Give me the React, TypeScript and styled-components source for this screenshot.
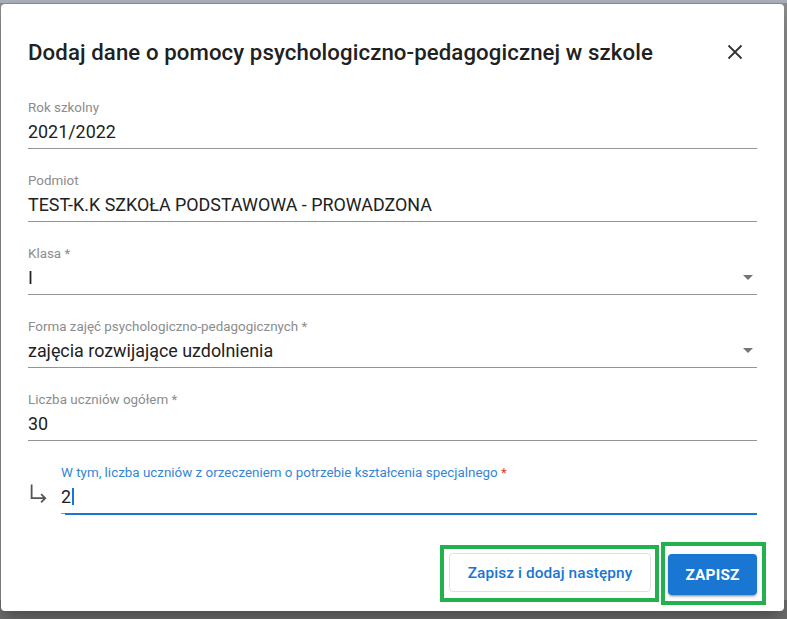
import React from "react";
import styled, { createGlobalStyle } from "styled-components";

const GlobalStyle = createGlobalStyle`
  html, body {
    margin: 0;
    padding: 0;
  }
  body {
    width: 787px;
    height: 619px;
    overflow: hidden;
    font-family: Roboto, "Noto Sans", Arial, sans-serif;
    background: linear-gradient(to bottom, #a9adb5 0, #a9adb5 3px, #8a8a8a 3px, #8a8a8a 600px, #6e6e6e 600px);
  }
`;

const Backdrop = styled.div`
  display: flex;
  justify-content: flex-start;
  padding: 4px 0 0 1px;
`;

const Dialog = styled.div`
  width: 783px;
  height: 607px;
  background: #fff;
  border-radius: 4px;
  box-sizing: border-box;
  display: flex;
  flex-direction: column;
  box-shadow: 0 8px 10px -5px rgba(0, 0, 0, 0.2), 0 16px 24px 2px rgba(0, 0, 0, 0.14);
`;

const Header = styled.div`
  display: flex;
  align-items: center;
  justify-content: space-between;
  padding: 32px 37px 0 27px;
  height: 32px;
`;

const Title = styled.h2`
  margin: 0;
  font-size: 22.2px;
  line-height: 32px;
  font-weight: 500;
  color: #212121;
  letter-spacing: 0.1px;
`;

const CloseButton = styled.button`
  border: 0;
  background: transparent;
  padding: 0;
  width: 24px;
  height: 24px;
  display: flex;
  align-items: center;
  justify-content: center;
  color: #333;
  cursor: pointer;
`;

const Form = styled.div`
  display: flex;
  flex-direction: column;
  padding: 8px 27px 0 27px;
`;

const Field = styled.div`
  display: flex;
  flex-direction: column;
  padding-top: 24px;
  flex: 1;
`;

const Label = styled.label<{ $focused?: boolean }>`
  font-size: 13.4px;
  line-height: 16px;
  height: 16px;
  color: ${(p) => (p.$focused ? "#3585d6" : "#8c8c8c")};
  white-space: nowrap;
`;

const Required = styled.span<{ $focused?: boolean }>`
  color: ${(p) => (p.$focused ? "#e53935" : "inherit")};
`;

const InputRow = styled.div<{ $focused?: boolean }>`
  position: relative;
  display: flex;
  align-items: center;
  margin-top: 3px;
  height: 28px;
  padding-bottom: 1px;
  border-bottom: 1px solid #949494;
  box-sizing: content-box;

  ${(p) =>
    p.$focused &&
    `
    &::after {
      content: "";
      position: absolute;
      left: 4px;
      right: 0;
      bottom: -2px;
      height: 2px;
      background: #1976d2;
    }
  `}
`;

const Value = styled.span`
  flex: 1;
  font-size: 17.9px;
  line-height: 24px;
  color: #212121;
  padding-bottom: 3px;
  display: flex;
  align-items: center;
`;

const Caret = styled.span`
  display: inline-block;
  width: 2px;
  height: 17px;
  background: #1976d2;
  margin-left: 1px;
`;

const DropArrow = styled.svg`
  width: 10px;
  height: 5px;
  margin-right: 4px;
  margin-bottom: 4px;
  fill: #757575;
`;

const NestedRow = styled.div`
  display: flex;
  align-items: flex-start;
`;

const IndentIcon = styled.svg`
  width: 21px;
  height: 21px;
  margin: 42px 11px 0 1px;
  flex: none;
`;

const Actions = styled.div`
  display: flex;
  justify-content: flex-end;
  align-items: center;
  gap: 2px;
  padding: 28px 18px 0 0;
`;

const Highlight = styled.div<{ $pad: string }>`
  border: 4px solid #22b14c;
  padding: ${(p) => p.$pad};
  display: flex;
`;

const OutlinedButton = styled.button`
  width: 202px;
  height: 39px;
  border: 1px solid #e0e0e0;
  border-radius: 4px;
  background: #fff;
  color: #1976d2;
  font-family: Roboto, "Noto Sans", Arial, sans-serif;
  font-size: 15.4px;
  font-weight: 500;
  letter-spacing: 0.1px;
  cursor: pointer;
`;

const PrimaryButton = styled.button`
  width: 89px;
  height: 41px;
  border: 0;
  border-radius: 4px;
  background: #1976d2;
  color: #fff;
  font-family: Roboto, "Noto Sans", Arial, sans-serif;
  font-size: 15.4px;
  font-weight: 700;
  letter-spacing: 0.2px;
  text-transform: uppercase;
  box-shadow: 0 3px 1px -2px rgba(0, 0, 0, 0.2), 0 2px 2px 0 rgba(0, 0, 0, 0.14),
    0 1px 5px 0 rgba(0, 0, 0, 0.12);
  cursor: pointer;
`;

type FieldDef = {
  label: string;
  required?: boolean;
  value: string;
  select?: boolean;
};

const fields: FieldDef[] = [
  { label: "Rok szkolny", value: "2021/2022" },
  { label: "Podmiot", value: "TEST-K.K SZKOŁA PODSTAWOWA - PROWADZONA" },
  { label: "Klasa", required: true, value: "I", select: true },
  {
    label: "Forma zajęć psychologiczno-pedagogicznych",
    required: true,
    value: "zajęcia rozwijające uzdolnienia",
    select: true,
  },
  { label: "Liczba uczniów ogółem", required: true, value: "30" },
];

function ArrowDown() {
  return (
    <DropArrow viewBox="0 0 10 5">
      <path d="M0 0l5 5 5-5z" />
    </DropArrow>
  );
}

export default function App() {
  return (
    <>
      <GlobalStyle />
      <Backdrop>
        <Dialog>
          <Header>
            <Title>Dodaj dane o pomocy psychologiczno-pedagogicznej w szkole</Title>
            <CloseButton aria-label="Zamknij">
              <svg width="16" height="16" viewBox="0 0 16 16">
                <path d="M1.5 1.5L14.5 14.5M14.5 1.5L1.5 14.5" stroke="#333" strokeWidth="1.8" />
              </svg>
            </CloseButton>
          </Header>
          <Form>
            {fields.map((f) => (
              <Field key={f.label}>
                <Label>
                  {f.label}
                  {f.required && <Required> *</Required>}
                </Label>
                <InputRow>
                  <Value>{f.value}</Value>
                  {f.select && <ArrowDown />}
                </InputRow>
              </Field>
            ))}
            <NestedRow>
              <IndentIcon viewBox="0 0 20 20">
                <path
                  d="M2.5 1.5v13h13M11.5 10.5l4 4-4 4"
                  fill="none"
                  stroke="#555"
                  strokeWidth="1.7"
                />
              </IndentIcon>
              <Field>
                <Label $focused>
                  W tym, liczba uczniów z orzeczeniem o potrzebie kształcenia specjalnego
                  <Required $focused> *</Required>
                </Label>
                <InputRow $focused>
                  <Value>
                    2<Caret />
                  </Value>
                </InputRow>
              </Field>
            </NestedRow>
          </Form>
          <Actions>
            <Highlight $pad="4px 4px 6px 5px">
              <OutlinedButton>Zapisz i dodaj następny</OutlinedButton>
            </Highlight>
            <Highlight $pad="8px 5px 6px 3px">
              <PrimaryButton>Zapisz</PrimaryButton>
            </Highlight>
          </Actions>
        </Dialog>
      </Backdrop>
    </>
  );
}
